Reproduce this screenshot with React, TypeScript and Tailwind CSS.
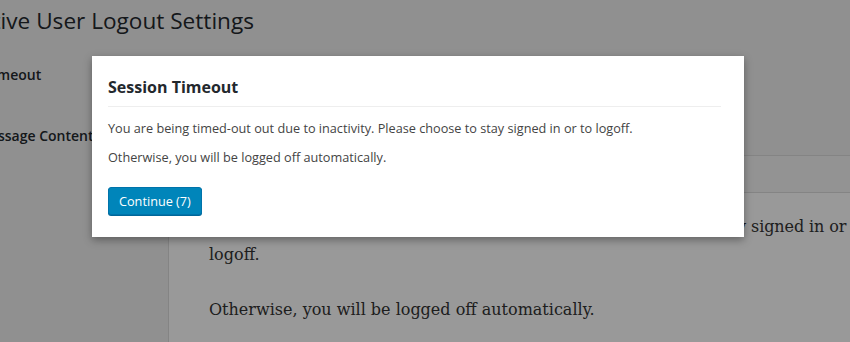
export default function App() {
  return (
    <div className="relative h-[342px] w-[850px] overflow-hidden bg-[#f1f1f1] font-['Open_Sans',sans-serif] text-[#23282d]">
      <div className="-ml-[51px]">
        <h1 className="mt-[6px] text-[22.6px] leading-[30px] font-normal whitespace-nowrap">Inactive User Logout Settings</h1>
      </div>

      <div className="mt-[29px]">
        <div className="-ml-[15px] text-[14px] leading-[20px] font-semibold whitespace-nowrap">Timeout</div>
      </div>

      <div className="mt-[41px] flex">
        <div className="w-[168px] shrink-0">
          <div className="-ml-[23px] text-[14px] leading-[20px] font-semibold whitespace-nowrap">Message Content</div>
        </div>
        <div className="mt-[29px] h-[300px] w-[800px] shrink-0 border border-[#dddddd] bg-white">
          <div className="h-[37px] border-b border-[#dddddd] bg-[#f5f5f5]"></div>
          <div className="px-[40px] pt-[20px] font-['DejaVu_Serif',serif] text-[16px] leading-[28px] text-[#333]">
            <p className="whitespace-nowrap tracking-[-0.1px]">You are being timed-out out due to inactivity. Please choose to stay signed in or</p>
            <p>logoff.</p>
            <p className="mt-[27px]">Otherwise, you will be logged off automatically.</p>
          </div>
        </div>
      </div>

      {/* overlay + dialog */}
      <div className="absolute inset-0 bg-black/40"></div>
      <div className="absolute left-[92px] top-[56px] w-[652px] bg-white pl-4 pr-[23px] pt-[19px] pb-[22px] shadow-[0_3px_8px_rgba(0,0,0,0.35)]">
        <h2 className="text-[16px] leading-[24px] font-bold text-[#23282d]">Session Timeout</h2>
        <div className="mt-[7px] h-px bg-[#eeeeee]"></div>
        <p className="mt-[11px] text-[12.7px] leading-[20px] text-[#444]">You are being timed-out out due to inactivity. Please choose to stay signed in or to logoff.</p>
        <p className="mt-[9px] text-[12.7px] leading-[20px] text-[#444]">Otherwise, you will be logged off automatically.</p>
        <button
          type="button"
          className="mt-[20px] h-[28px] rounded-[3px] border border-[#0073aa] bg-[#0085ba] px-[10px] text-[12.7px] leading-[26px] text-white shadow-[0_1px_0_#006799]"
        >
          Continue (7)
        </button>
      </div>
    </div>
  );
}
